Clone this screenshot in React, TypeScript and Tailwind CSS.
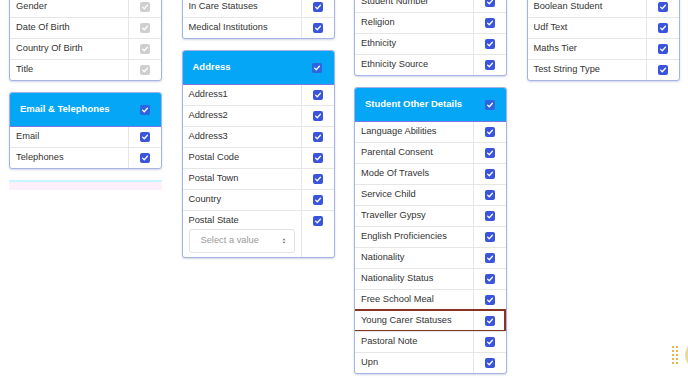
import React from 'react';

type Row = { label: string; disabled?: boolean; select?: boolean; marked?: boolean };

function Check({ disabled, header }: { disabled?: boolean; header?: boolean }) {
	const bg = disabled ? 'bg-[#cfcfcf]' : header ? 'bg-[#2f63e0]' : 'bg-[#3a55dc]';
	return (
		<span className={`flex h-[10px] w-[10px] items-center justify-center rounded-[2px] ${bg}`}>
			<svg viewBox="0 0 10 10" className="h-[8px] w-[8px]">
				<path d="M2 5.2 L4.1 7.2 L8 2.8" fill="none" stroke="#fff" strokeWidth="1.6" strokeLinecap="round" strokeLinejoin="round" />
			</svg>
		</span>
	);
}

function Card({ title, rows }: { title?: string; rows: Row[] }) {
	return (
		<div className="overflow-hidden rounded-[3px] border border-[#a7b3e6] bg-white shadow-[0_1px_2px_rgba(80,90,160,0.25)]">
			{title && (
				<div className="flex h-[34px] items-center border-b border-[#7d74e6] bg-[#06a6f6]">
					<span className="flex-1 pl-[10px] text-[9.5px] font-bold text-white">{title}</span>
					<span className="flex w-[33px] justify-center">
						<Check header />
					</span>
				</div>
			)}
			{rows.map((r, i) => (
				<div key={r.label} className={`relative flex ${i > 0 ? 'border-t border-[#e6e6e6]' : ''}`}>
					<div className="flex-1 px-[6px]">
						<div className="flex h-[20px] items-center text-[9.3px] text-[#333]">{r.label}</div>
						{r.select && (
							<div className="mb-[4px] mt-[-2px] flex h-[24px] items-center justify-between rounded-[3px] border border-[#e2e2e2] pl-[11px] pr-[8px] text-[9.3px] text-[#9a9a9a]">
								Select a value
								<svg viewBox="0 0 6 10" className="h-[8px] w-[4px]">
									<path d="M0.5 4 L3 1.2 L5.5 4 Z M0.5 6 L3 8.8 L5.5 6 Z" fill="#777" />
								</svg>
							</div>
						)}
					</div>
					<div className="flex w-[33px] justify-center border-l border-[#e6e6e6] pt-[5px]">
						<Check disabled={r.disabled} />
					</div>
					{r.marked && (
						<span className="absolute -left-[3px] right-0 -top-[2px] -bottom-[1px] border-2 border-[#8a3322]" />
					)}
				</div>
			))}
		</div>
	);
}

const r = (labels: string[], extra: Partial<Row> = {}): Row[] => labels.map((label) => ({ label, ...extra }));

export default function App() {
	return (
		<div className="relative h-[378px] w-[688px] overflow-hidden bg-white font-['Liberation_Sans',Arial,sans-serif]">
			<div className="flex gap-[19.5px] pl-[9px]">
				<div className="-mt-[4px] flex w-[153px] flex-col gap-[11px]">
					<Card rows={r(['Gender', 'Date Of Birth', 'Country Of Birth', 'Title'], { disabled: true })} />
					<Card title="Email & Telephones" rows={r(['Email', 'Telephones'])} />
					<div className="h-[10px] border-t-2 border-[#c8f6ff] bg-[#fdf0fb]" />
				</div>
				<div className="-mt-[4px] flex w-[153px] flex-col gap-[11px]">
					<Card rows={r(['In Care Statuses', 'Medical Institutions'])} />
					<Card
						title="Address"
						rows={[
							...r(['Address1', 'Address2', 'Address3', 'Postal Code', 'Postal Town', 'Country']),
							{ label: 'Postal State', select: true },
						]}
					/>
				</div>
				<div className="-mt-[9px] flex w-[153px] flex-col gap-[11px]">
					<Card rows={r(['Student Number', 'Religion', 'Ethnicity', 'Ethnicity Source'])} />
					<Card
						title="Student Other Details"
						rows={[
							...r([
								'Language Abilities',
								'Parental Consent',
								'Mode Of Travels',
								'Service Child',
								'Traveller Gypsy',
								'English Proficiencies',
								'Nationality',
								'Nationality Status',
								'Free School Meal',
							]),
							{ label: 'Young Carer Statuses', marked: true },
							...r(['Pastoral Note', 'Upn']),
						]}
					/>
				</div>
				<div className="-mt-[4px] flex w-[153px] flex-col">
					<Card rows={r(['Boolean Student', 'Udf Text', 'Maths Tier', 'Test String Type'])} />
				</div>
			</div>
			{/* drag grip + chat bubble edge */}
			<div className="absolute left-[672px] top-[346px] grid grid-cols-2 gap-[2px]">
				{Array.from({ length: 10 }).map((_, i) => (
					<span key={i} className="h-[2px] w-[2px] bg-[#f0b04a]" />
				))}
			</div>
			<div className="absolute left-[685px] top-[340px] h-[30px] w-[30px] rounded-full bg-[#e9d8a0]" />
		</div>
	);
}
